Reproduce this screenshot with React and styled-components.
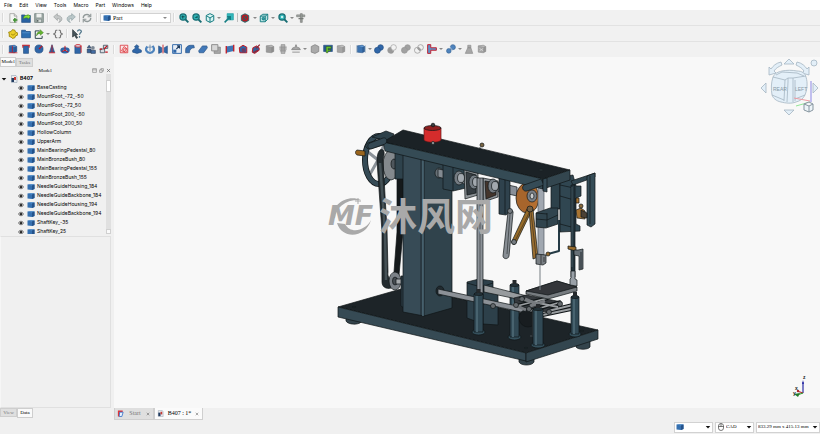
import { Fragment } from "react";
import styled, { createGlobalStyle } from "styled-components";

const blue = "#2f66a8";
const navy = "#244d80";
const red = "#c4141e";
const gray = "#9a9a9a";
const teal = "#189aa0";

const magnifier = (
    <>
        <path d="M10 10l5 5" stroke="#176c72" strokeWidth="3" />
        <circle cx="6.500" cy="6.500" r="5" fill="#2fb2b4" stroke="#176c72" strokeWidth="2" />
    </>
);

const box = (fill, top, line) => (
    <>
        <path d="M2 3l8-1 4 2v8l-4 2-8-1z" fill={fill} stroke={line} strokeWidth=".8" />
        <path d="M2 3l8-1 4 2-4 1z" fill={top} stroke={line} strokeWidth=".4" />
        <path d="M10 5v9l4-2V4z" fill={line} fillOpacity=".5" />
    </>
);

const icons = {
    newFile: (
        <>
            <path d="M3 1h7l4 4v10H3z" fill="#f4f5f3" stroke="#8c8f8a" />
            <path d="M10 1v4h4" fill="#ddd" stroke="#8c8f8a" />
            <path d="M11 8v7M8 11h7" stroke="#3d8f2f" strokeWidth="2.400" />
        </>
    ),
    open: (
        <>
            <path d="M1 3h5l1 1h8v11H1z" fill="#2a62a2" stroke={navy} />
            <path d="M4 9c0-5 4-6 7-5V2l4 4-4 4V8c-3-1-5 0-7 1z" fill="#8ae234" stroke="#3c7d10" strokeWidth=".6" />
        </>
    ),
    save: (
        <>
            <path d="M1 1h14v14H1z" fill="#9ca7a4" stroke="#61706d" />
            <path d="M4 1h8v6H4z" fill="#eef0ee" />
            <path d="M4 10h8v5H4z" fill="#d5dad8" stroke="#61706d" strokeWidth=".7" />
            <path d="M5 11h2v3H5z" fill="#4d5856" />
        </>
    ),
    undo: <path d="M1 6l6-5v3c6 0 8 4 7 7-1 2-3 4-5 4 3-3 3-6-2-6v3z" fill="#c4c7c7" stroke="#8f9494" strokeWidth=".9" />,
    redo: <path d="M15 6L9 1v3C3 4 1 8 2 11c1 2 3 4 5 4-3-3-3-6 2-6v3z" fill="#b9c6c8" stroke="#84989b" strokeWidth=".9" />,
    refresh: (
        <g fill="none" stroke="#919999" strokeWidth="2.200">
            <path d="M2 8c0-5 7-8 11-3M14 8c0 5-7 8-11 3" />
            <path d="M14 1v5H9M2 15v-5h5" strokeWidth="1.800" />
        </g>
    ),
    zoomFit: <>{magnifier}<path d="M6 4v5M4 6h5" stroke="#104b4f" strokeWidth="1.500" /></>,
    zoomSelection: <>{magnifier}<path d="M4 8l5-4v4z" fill="#145c60" /></>,
    isometric: (
        <g fill="#d7f3f2" stroke="#167c80" strokeWidth="1.600">
            <path d="M8 1l6 3v8l-6 3-6-3V4z" />
            <path d="M2 4l6 4 6-4M8 8v7" />
        </g>
    ),
    link: (
        <>
            <path d="M5 1h10v10H5z" fill="#33b7bb" stroke={teal} />
            <path d="M1 15l8-8M5 6h5v5" fill="none" stroke="#157d83" strokeWidth="2.400" />
        </>
    ),
    drawStyle: (
        <>
            <path d="M8 1l6 3v8l-6 3-6-3V4z" fill="#267e83" stroke="#174b50" />
            <circle cx="8" cy="8" r="4.500" fill="#36555a" stroke="#bc1620" strokeWidth="2" />
            <path d="M5 5l6 6" stroke="#bc1620" strokeWidth="2" />
        </>
    ),
    bounding: (
        <g fill="#b7e2e3" stroke="#167c80" strokeWidth="1.500">
            <path d="M2 5l4-3h8v8l-4 4H2z" />
            <path d="M2 5h8v9M10 5l4-3" fill="none" />
            <circle cx="7" cy="9" r="2" fill="#2ca0a4" />
        </g>
    ),
    zoomTool: <>{magnifier}<circle cx="6.500" cy="6.500" r="2" fill="#c8f3f2" /></>,
    measure: (
        <>
            <path d="M1 3h13v3H1z" fill="#a5a9a6" stroke="#767a77" />
            <path d="M7 1h3v14H7z" fill="#989c99" stroke="#767a77" />
            <path d="M4 9h8" stroke="#767a77" strokeWidth="2" />
        </>
    ),
    part: (
        <>
            <path d="M7 1l4 1 1 3 3 1v4l-3 1-1 3-4 1-2-2-3-1V8L1 5l4-1z" fill="#ecd02c" stroke="#9c8306" strokeWidth="1.400" />
            <path d="M5 8l3 2 4-3" fill="none" stroke="#9c8306" strokeWidth="1.400" />
        </>
    ),
    folder: (
        <>
            <path d="M1 2h6l1 2h7v10H1z" fill="#2d6eb0" stroke="#1c4d85" strokeWidth="1.200" />
            <path d="M2 6h12" stroke="#5b95cf" strokeWidth="1.200" />
        </>
    ),
    exportLink: (
        <>
            <path d="M9 3H2v12h11v-4" fill="#f3f3f3" stroke="#31484e" strokeWidth="1.600" />
            <path d="M4 11c0-5 3-7 6-7V1l5 5-5 4V7c-3 0-4 1-6 4z" fill="#63b72e" stroke="#37711a" strokeWidth=".7" />
        </>
    ),
    braces: (
        <g fill="none" stroke="#777" strokeWidth="1.800">
            <path d="M7 2H5L4 3v3L1 8l3 2v3l1 1h2M9 2h2l1 1v3l3 2-3 2v3l-1 1H9" />
        </g>
    ),
    whatsThis: (
        <>
            <path d="M1 1l8 8H6l3 5-2 1-3-5-3 3z" fill="#46545b" stroke="#202a2f" />
            <path d="M9 4c0-4 6-3 6 0 0 2-3 2-3 5M12 11v3" fill="none" stroke="#4c7388" strokeWidth="2" />
        </>
    ),
    cube: <>{box(blue, "#5b92cc", navy)}<path d="M1 14h14M7 3v10" stroke={red} strokeWidth="1.200" /></>,
    cylinder: (
        <>
            <path d="M4 3h8v12H4z" fill={blue} stroke={navy} />
            <path d="M2 2h12M3 2v4M13 2v4" stroke={red} strokeWidth="1.600" />
        </>
    ),
    sphere: <><circle cx="8" cy="8" r="6.500" fill={blue} stroke={navy} /><path d="M8 8l5-5" stroke={red} strokeWidth="1.800" /></>,
    cone: <><path d="M8 1l4 12H4z" fill={blue} stroke={navy} /><path d="M8 2v11M3 14h10" stroke={red} strokeWidth="1.400" /></>,
    torus: (
        <>
            <ellipse cx="8" cy="10" rx="5.500" ry="3" fill="none" stroke={blue} strokeWidth="4" />
            <path d="M8 3v7l5 3M8 10l-5 2" fill="none" stroke={red} strokeWidth="1.600" />
        </>
    ),
    tube: (
        <>
            <path d="M3 3h9v12H3z" fill={blue} stroke={navy} />
            <ellipse cx="8" cy="3" rx="5" ry="2" fill="#dbe8f5" stroke={red} strokeWidth="1.400" />
            <path d="M13 3v11" stroke={red} strokeWidth="1.400" />
        </>
    ),
    primitives: (
        <>
            <path d="M2 6l3-4 3 4zM2 8h6v6H2z" fill="#3a6399" stroke="#293c55" />
            <circle cx="11" cy="6" r="3" fill="#7c8794" />
            <path d="M8 10h7v5H8z" fill="#436ea5" stroke="#293c55" />
        </>
    ),
    builder: (
        <>
            <path d="M2 8h7v6H2zM7 2h7v5H7z" fill="#d8dde3" stroke="#4d5966" strokeWidth="1.400" />
            <path d="M1 8h4M8 8l5-5M10 13h4" stroke={red} strokeWidth="2" />
        </>
    ),
    sketch: (
        <>
            <path d="M2 2h12v12H2z" fill="#fbe7e7" stroke="#d82930" strokeWidth="1.200" />
            <path d="M4 11l4-7 4 3-3 5z" fill="none" stroke="#d82930" strokeWidth="1.200" />
            <circle cx="10" cy="10" r="3" fill="none" stroke="#d82930" />
        </>
    ),
    extrude: <path d="M1 10l4-3V4H4l4-3 3 3h-1v3l5 3v3l-7 2-7-2z" fill={blue} stroke={navy} />,
    revolve: (
        <>
            <path d="M4 4c-5 5-1 10 4 10s9-5 4-11" fill="none" stroke="#4d83bd" strokeWidth="3.600" />
            <path d="M8 1v10M5 5h6" stroke="#7893b0" strokeWidth="1.600" />
        </>
    ),
    mirror: <><path d="M1 3l5 3v7l-5 2zM15 3l-5 3v7l5 2z" fill={blue} stroke={navy} /><path d="M8 1v14" stroke={red} strokeWidth="1.400" /></>,
    scale: (
        <>
            <path d="M1 1h14v14H1z" fill="#e6edf6" stroke={blue} strokeWidth="1.500" />
            <path d="M2 9h5v5H2z" fill={blue} />
            <path d="M7 8l5-5M8 3h4v4" fill="none" stroke="#1e3c60" strokeWidth="1.700" />
        </>
    ),
    fillet: <path d="M1 14V9c0-4 4-7 8-7h5l1 4c-5 0-8 3-8 8z" fill="#3b72b2" stroke={navy} />,
    chamfer: <path d="M1 11l6-8h7l1 3-6 8H2z" fill="#4178b8" stroke={navy} />,
    makeFace: <><path d="M5 5h10v10H5z" fill="#a8a8a8" stroke="#777" /><path d="M1 1h10v10H1z" fill="#d7d7d7" stroke="#8b8b8b" strokeWidth="1.500" /></>,
    ruled: <><path d="M2 4l12-2v9L2 14z" fill="#3f76b5" /><path d="M2 3v12M14 1v11" stroke={red} strokeWidth="2" /></>,
    loft: <><path d="M2 6l6-4 6 3v9H3z" fill={blue} stroke={red} strokeWidth="1.500" /><path d="M6 7h6v7H6z" fill="#6c3c63" /></>,
    sweep: <><path d="M3 6l6-3 4 3v4l-7 5-4-2z" fill="#34629b" stroke={red} strokeWidth="1.500" /><path d="M8 7l6-6M3 14l8-4" stroke="#922334" strokeWidth="2" /></>,
    section: <>{box("#9a9a9a", "#bdbdbd", "#808080")}</>,
    cross: (
        <>
            <path d="M5 1h6v14H5z" fill="#b7b7b7" stroke="#858585" />
            <path d="M2 5h12M2 8h12M3 11h10" stroke="#8d8d8d" strokeWidth="1.600" />
        </>
    ),
    offset: <path d="M8 1l2 5h3l2 3H1l2-3h3zM2 13h12" fill="#aaa" stroke="#828282" strokeWidth="1.300" />,
    thickness: <path d="M2 4l6-3 6 3v8l-6 3-6-2z" fill="#aaa" stroke="#858585" strokeWidth="1.300" />,
    attach: <><path d="M1 2h14v10H1z" fill="#28588f" stroke={navy} /><path d="M5 14V4h8v3H8v2h4v2H8v3z" fill="#68c42a" stroke="#244b12" strokeWidth=".7" /></>,
    projection: box("#a6a6a6", "#c6c6c6", "#878787"),
    compound: <>{box("#3c73b0", "#69a0d8", navy)}<path d="M1 2v12M15 2v12" stroke="#aabbc9" strokeWidth="1.400" /></>,
    boolean: <g fill={blue} stroke={navy}><circle cx="10.500" cy="5.500" r="4.500" /><circle cx="5.500" cy="10" r="4.800" /></g>,
    cut: <g fill="#f2f2f2" stroke={gray}><circle cx="10.500" cy="5.500" r="4.500" /><path d="M6 5a5 5 0 1 0 5 6c-3 0-5-3-5-6z" fill="#999" /></g>,
    union: <g fill="#a1a1a1" stroke="#959595"><circle cx="10.500" cy="5.500" r="4.500" /><circle cx="5.500" cy="10" r="4.800" /></g>,
    common: <g fill="none" stroke={gray} strokeWidth="1.200"><circle cx="10.500" cy="5.500" r="4.500" /><circle cx="5.500" cy="10" r="4.800" /><path d="M6 6l4 4" strokeWidth="3" /></g>,
    join: <path d="M1 1h5v5h9v4H6v5H1z" fill="#5e91c6" stroke="#c51c2b" strokeWidth="1.500" />,
    split: <g fill="#4e83bd" stroke="#376493"><circle cx="11" cy="5" r="4" /><circle cx="4.500" cy="11" r="3.700" /><path d="M6 4l5 7" stroke="#b9cce0" /></g>,
    check: <path d="M6 6h5l3 9H2zM6 2h5v4H6z" fill="#a7a7a7" stroke="#8b8b8b" />,
    defeature: <>{box("#a3a3a3", "#bdbdbd", "#858585")}<path d="M4 7l6 4M10 7l-6 4" stroke="#ddd" strokeWidth="1.200" /></>,
    block: (
        <>
            <path d="M1 3l9-1 5 1v9l-5 2-9-1z" fill="#3570b0" />
            <path d="M1 3l9-1 5 1-5 2z" fill="#5d94cc" />
            <path d="M10 5l5-2v9l-5 2z" fill="#24528a" />
        </>
    ),
    eye: (
        <>
            <path d="M1 8c4-6 10-6 14 0-4 6-10 6-14 0z" fill="#ddd" stroke="#222" strokeWidth="1.600" />
            <circle cx="8" cy="8" r="3" fill="#111" />
        </>
    ),
    doc: (
        <>
            <path d="M3 1h9l2 3v11H3z" fill="#e7ebf0" stroke="#8796a6" />
            <path d="M3 6h5v8H3z" fill="#233d61" />
            <path d="M8 4h4v6H8z" fill="#c93a34" />
        </>
    ),
    start: (
        <>
            <path d="M2 1h11v4H6v10H2z" fill="#df3438" />
            <path d="M6 5h8l-3 10H5z" fill="#e9f2ff" stroke="#2e6ac4" strokeWidth="1.800" />
        </>
    ),
    mouse: <g fill="none" stroke="#333" strokeWidth="1.300"><rect x="3" y="1" width="10" height="14" rx="5" /><path d="M3 7h10M8 1v6" /></g>,
    float: <path d="M2 2h12v12H2zM2 6h12" fill="none" stroke="#666" strokeWidth="1.600" />,
    restore: <path d="M2 6h8v8H2zM6 6V2h8v8h-4" fill="none" stroke="#666" strokeWidth="1.600" />,
    close: <path d="M3 3l10 10M13 3L3 13" stroke="#555" strokeWidth="2" />,
    down: <path d="M2 5h12l-6 7z" fill="#111" />,
};

const Icon = ({ name, size = 10 }) => (
    <svg width={size} height={size} viewBox="0 0 16 16" fill="none" aria-hidden="true">
        {icons[name]}
    </svg>
);

const menus = ["File", "Edit", "View", "Tools", "Macro", "Part", "Windows", "Help"];

const viewTools = ["zoomFit", "zoomSelection", "isometric+", "link", "|", "drawStyle+", "bounding+", "zoomTool+", "measure"];
const solidTools = ["cube", "cylinder", "sphere", "cone", "torus", "tube", "primitives", "builder"];
const shapeTools = [
    "sketch", "extrude", "revolve", "mirror", "scale", "fillet", "chamfer", "makeFace", "ruled", "loft",
    "sweep", "section", "cross", "offset+", "thickness", "attach", "projection",
];
const booleanTools = ["compound+", "boolean", "cut", "union", "common", "join+", "split+", "check", "defeature"];

const treeItems = [
    "BaseCasting", "MountFoot_-72_-50", "MountFoot_-72_50", "MountFoot_200_-50", "MountFoot_200_50",
    "HollowColumn", "UpperArm", "MainBearingPedestal_80", "MainBronzeBush_80", "MainBearingPedestal_155",
    "MainBronzeBush_155", "NeedleGuideHousing_184", "NeedleGuideBackbone_184", "NeedleGuideHousing_194",
    "NeedleGuideBackbone_194", "ShaftKey_-35", "ShaftKey_25",
];

const ToolGroup = ({ items, width }) => (
    <>
        <Grip />
        <Group $width={width}>
            {items.map((item) => {
                if (item === "|") return <Divider key={item} />;
                const name = item.replace("+", "");
                return (
                    <Fragment key={item}>
                        <ToolButton aria-label={name}>
                            <Icon name={name} />
                        </ToolButton>
                        {item.endsWith("+") && (
                            <MoreButton aria-label={`${name} options`}>
                                <Arrow />
                            </MoreButton>
                        )}
                    </Fragment>
                );
            })}
        </Group>
    </>
);

const Picker = ({ label, icon, value, width }) => (
    <PickerBox $width={width}>
        {icon && <Icon name={icon} size={8} />}
        <PickerSelect aria-label={label} defaultValue={value}>
            <option value={value}>{value}</option>
        </PickerSelect>
        <Icon name="down" size={6} />
    </PickerBox>
);

const Post = ({ x, y, width, height }) => (
    <g>
        <ellipse cx={x + width / 2} cy={y + height} rx={width / 2 + 2} ry="3" fill="#35505c" stroke="#101517" />
        <path d={`M${x} ${y}h${width}v${height}h-${width}z`} fill="#314955" stroke="#101517" />
        <path d={`M${x + 3} ${y + 1}v${height - 1}`} stroke="#48636f" strokeWidth="2" />
        <ellipse cx={x + width / 2} cy={y} rx={width / 2} ry="1.500" fill="#243239" stroke="#101517" />
        <path d={`M${x + width / 2} ${y - 1}v-4`} stroke="#25292c" strokeWidth="4" />
    </g>
);

const Machine = () => (
    <Scene viewBox="114 57 706 351" preserveAspectRatio="xMidYMid meet" role="img" aria-label="Machine assembly">
        <g stroke="#101517" strokeWidth=".7" strokeLinejoin="round">
            {/* feet and base plate */}
            <path d="M346 316v5c2 4 13 4 15 1v-5z" fill="#34444c" />
            <path d="M519 358v4c2 4 13 4 15 0v-6z" fill="#34444c" />
            <path d="M576 342v5c2 3 12 3 14 0v-6z" fill="#34444c" />
            <path d="M338 307l70-20 190 43-72 23z" fill="#1d2428" />
            <path d="M338 307l188 46v8l-188-44z" fill="#364a54" />
            <path d="M526 353l72-23v9l-72 23z" fill="#33464f" />
            <ellipse cx="354" cy="307" rx="2" ry=".6" fill="#3b4c54" />
            <ellipse cx="526" cy="348" rx="2" ry=".6" fill="#3b4c54" />
            <ellipse cx="582" cy="331" rx="2" ry=".6" fill="#3b4c54" />

            {/* hand wheel */}
            <path d="M378 160l-10-8M378 160l-9 16M378 160l4 18M378 160l7-18" stroke="#8b9299" strokeWidth="3" />
            <ellipse cx="379" cy="160" rx="14" ry="24" fill="none" stroke="#101517" strokeWidth="6" />
            <ellipse cx="379" cy="160" rx="14" ry="24" fill="none" stroke="#354a55" strokeWidth="4.500" />
            <path d="M357 150l8 1v5l-8-1c-2-1-2-4 0-5z" fill="#9a651d" />
            <path d="M372 137l14-6 8 3-4 9-20 6c-5 0-6-5-2-6l12-4z" fill="#2e414a" />

            {/* belt and pulleys */}
            <ellipse cx="391" cy="165" rx="8" ry="15" fill="#84898d" />
            <path d="M377 161c0-9 3-13 6-11 2 1 1 6 0 10l4 70 1 42c-1 6 3 9 8 6l-2 9c-6 3-12 1-12-5v-50z" fill="#242c30" />
            <path d="M380 163l5 68 1 49" fill="none" stroke="#455156" strokeWidth="2.500" />
            <path d="M397 178h6v54l-4 43-5-3 3-40z" fill="#15191b" />
            <ellipse cx="395" cy="281" rx="6" ry="9" fill="#7b8187" />
            <ellipse cx="395" cy="281" rx="2.500" ry="4" fill="#474d52" />
            <path d="M396 279h7v5h-7z" fill="#a5a9ac" />
            <path d="M401 276h3v32l-3-2z" fill="#2c3d46" />
            <ellipse cx="394" cy="164" rx="3" ry="5" fill="#4e565c" />
            <path d="M395 152h9v27h-9z" fill="#2e424c" />

            {/* column */}
            <path d="M403 150l21 6v160l-21-4z" fill="#374b56" />
            <path d="M424 156l28 6v146l-28 8z" fill="#30434c" />
            <path d="M421 157v159" stroke="#141a1d" />
            <path d="M423 157v159" stroke="#4c6774" strokeWidth="1.500" />

            {/* main shaft and bearings */}
            <ellipse cx="439" cy="173" rx="4" ry="5" fill="#687177" />
            <path d="M438 169l16 3v9l-16-4z" fill="#828a91" />
            <path d="M443 164l23 5v19l-13 3-10-2z" fill="#2f434d" />
            <path d="M456 173l61 14v9l-61-14z" fill="#8a9098" />
            <path d="M453 166v25" />
            <path d="M464 169l14 4v22l-13 4z" fill="#8d9296" />
            <path d="M466 172l10 3v18l-9 2z" fill="#363d42" />
            <path d="M483 178l15 3v16l-15 5z" fill="#8d9296" />
            <path d="M485 181l11 2v12l-10 4z" fill="#44352c" />
            {[459, 474, 493].map((cx, i) => (
                <g key={cx}>
                    <ellipse cx={cx} cy={178 + i * 4} rx="5" ry="7" fill="#747c83" />
                    <ellipse cx={cx + 2} cy={178 + i * 4} rx="3.500" ry="4.500" fill="#a2a8ae" />
                </g>
            ))}
            <path d="M499 176l11 3v33l-4 3-7-1z" fill="#2f424d" />
            <path d="M505 178v36" />

            {/* rear bracket and rods under the arm */}
            <path d="M467 282l12-3 14 2v10l5 3v31l-15-1-16-6z" fill="#2d404a" />
            <path d="M467 283l14 4 12-4M483 287v38" fill="none" />
            <Post x={510} y={285} width={9} height={52} />
            <path d="M477 178h6v115h-6z" fill="#8c9298" />
            <path d="M480 178v115" stroke="#3c4144" />
            <ellipse cx="440" cy="291" rx="4" ry="5" fill="#202a2f" />
            <path d="M438 289l102 22v5l-102-22z" fill="#8c9197" />
            <path d="M484 285l47 12v5l-47-10z" fill="#979b9e" />
            <circle cx="528" cy="318" r="9" fill="#181d20" />

            {/* feed mechanism */}
            <path d="M514 298l12-3 36 7-2 7-14 3-31-6z" fill="#35393d" />
            <path d="M519 299l39 8M517 306l31-8M530 311l31-9M548 311l25-6M538 316l33-7" stroke="#101517" strokeWidth="4" />
            <path d="M519 299l39 8M517 306l31-8M530 311l31-9M548 311l25-6M538 316l33-7" stroke="#9a9ea1" strokeWidth="1.800" />
            <path d="M513 304l13 6M525 299l12 5M530 306l15-5" stroke="#777b7f" strokeWidth="3" />
            {[[516, 305], [522, 299], [529, 309], [549, 312], [493, 306], [560, 304]].map(([cx, cy]) => (
                <circle key={cx} cx={cx} cy={cy} r="2.500" fill="#656a6e" />
            ))}
            <path d="M533 310v27M530 336h7" stroke="#31383c" strokeWidth="2" />
            <path d="M526 291l31-10 20 6v4l-29 8-22-5z" fill="#777c80" />
            <path d="M526 291l31-10 20 6-29 8z" fill="#34363a" />
            <Post x={474} y={294} width={9} height={38} />
            <Post x={533} y={309} width={10} height={36} />
            <Post x={571} y={297} width={8} height={37} />

            {/* take-up links */}
            <ellipse cx="527" cy="198" rx="11" ry="15" fill="#a7652c" />
            <path d="M530 184c11 0 12 27 0 28" fill="#b56f31" />
            <ellipse cx="532" cy="196" rx="5" ry="6" fill="#7a8087" />
            <ellipse cx="532" cy="196" rx="2" ry="3" fill="#c7cacc" />
            <path d="M508 212c1-3 6-2 5 1l-4 43c-1 4-6 3-6 0z" fill="#888e94" />
            <path d="M510 214l-3 40" stroke="#30363a" />
            <path d="M527 209l5 1-16 33c-2 3-5 1-4-2z" fill="#966b29" />
            <path d="M529 209h4l5 48-5 2z" fill="#9b7033" />
            <path d="M530 211l-15 30M531 212l5 45" stroke="#40301b" />
            <circle cx="530" cy="209" r="3" fill="#756044" />
            <circle cx="514" cy="242" r="2.500" fill="#777d82" />
            <circle cx="510" cy="211" r="2.500" fill="#777d82" />

            {/* needle head */}
            <path d="M551 178h9v31h-9z" fill="#2d414a" />
            <path d="M538 187h6v68h-6z" fill="#a0a7b0" stroke="#555d65" />
            <path d="M536 213l14-5h8v16l-12 4-10-1z" fill="#30444e" />
            <path d="M536 219l11 1 11-5M547 213v14M536 213l11 1" fill="none" />
            <path d="M536 254l10 1v8l-3 2-7-1z" fill="#797f84" />
            <path d="M541 255v9M544 257v5" stroke="#222" />
            <path d="M540 265v25" stroke="#777e83" strokeWidth="1" />
            <path d="M559 220v31l-11 3" fill="none" stroke="#253b46" strokeWidth="2" />
            <circle cx="548" cy="254" r="2" fill="#956c31" />

            {/* presser bar and side plates */}
            <path d="M560 177l13-2 3 11h5v10l-5 2v26l4 2v5l-20 1z" fill="#304651" />
            <path d="M560 185l14 3M560 196l14 4M560 224l15 4M573 188v40" />
            <path d="M571 181l24-8v4l-22 8z" fill="#314650" />
            <path d="M587 176l8-3v51l-4 3-4-2z" fill="#354c57" />
            <path d="M590 176v48" />
            <path d="M571 185h4v92h-4z" fill="#24343c" />
            <path d="M572 187v80" stroke="#596f7a" strokeWidth=".6" />
            <path d="M576 198h3v5h-3zM576 210l5-2 4 3v8l-8-1z" fill="#a87432" />
            <path d="M581 210l6 3v5l-6-1z" fill="#4b4135" />
            <circle cx="581" cy="206" r="2" fill="#8c6a39" />
            <path d="M568 246l8 1v4l-8-2z" fill="#9a6d2d" />
            <path d="M574 250h4l5-1v20l-4 1v-14l-5-1z" fill="#687178" />
            <path d="M581 252v17" />
            <path d="M571 271h4v8l2 1v6l-7-1v-6l1-1z" fill="#9aa1a8" />

            {/* upper arm */}
            <path d="M383 142l20-12 167 40-27 9z" fill="#1b2226" />
            <path d="M383 142l160 37v10l-158-38z" fill="#354b55" />
            <path d="M543 179l27-9v10l-27 9z" fill="#33464f" />
            <path d="M524 185l17-6 3 6-17 6c-4 1-6-4-3-6z" fill="#354b56" />
            <path d="M543 179v12l4 1v-14z" fill="#354b56" />
            <path d="M370 143l13-5c4-1 5 4 2 6l-14 5c-4 0-4-5-1-6z" fill="#344853" />
            <ellipse cx="541" cy="170" rx="2" ry=".7" fill="#536168" />
            <circle cx="482" cy="145" r="2" fill="#796541" />
            <path d="M480 147v3" />

            {/* oil cap */}
            <path d="M424 128v12c2 3 15 3 17 0v-12z" fill="#d52c2c" stroke="#641818" />
            <ellipse cx="432.500" cy="128" rx="8.500" ry="2.500" fill="#8f2020" />
            <circle cx="433" cy="125" r="1.800" fill="#3c3d3f" />
            <circle cx="433" cy="143" r="1.500" fill="#a5a9ab" />
        </g>

        {/* watermark */}
        <g fill="#a9a9a9">
            <path d="M361 200c-15-6-29 5-29 19l3-1c1-11 11-19 26-18zM337 223c5 17 29 15 34-3-5 10-20 15-26 4z" />
            <path d="M358 198v6M355 201h6" stroke="#a9a9a9" strokeWidth="1" />
            <WatermarkLatin x="328" y="225">MF</WatermarkLatin>
            <WatermarkText x="379" y="230">沐风网</WatermarkText>
        </g>
    </Scene>
);

const NavigationCube = () => (
    <CubeOverlay viewBox="0 0 60 60" aria-label="Navigation cube">
        <g fill="#e3eff8" stroke="#a4b5c1" strokeWidth=".8" strokeLinejoin="round">
            <path d="M29 2l5 5H24zM29 58l-5-5h10zM1 31l5-5v10zM58 31l-5-5v10z" />
            <path d="M21 5c-5 1-8 4-10 7l-2-2v8l7-2-2-2c2-3 4-4 8-6zM37 5c5 1 8 4 10 7l2-2v8l-7-2 2-2c-2-3-4-4-8-6z" />
            <circle cx="54" cy="6" r="3" />
            <path d="M13 20c2-4 5-5 9-6 5-1 10-1 15 0 5 0 8 2 9 6 2 6 1 13-1 18-2 4-5 6-9 7-5 2-11 1-15 0-5-1-8-4-9-7-1-6-1-12 1-18z" />
            <path d="M13 20l12 3 3-2h5l13-2M12 38l12 5M35 42l10-4M25 23l-1 21M28 21v4l-1 20M33 21v24M35 23v21" fill="none" />
            <path d="M16 18l6-3 15 1 7 3" fill="none" />
        </g>
        <CubeText x="13" y="34">REAR</CubeText>
        <CubeText x="35" y="34">LEFT</CubeText>
        <path d="M51 24v21" stroke="#8c87e5" strokeWidth="1" />
        <path d="M34 41l16 3" stroke="#ec9ca2" strokeWidth="1" />
        <path d="M36 49l14-4" stroke="#91e596" strokeWidth="1" />
        <path d="M44 47l5-2 4 2v6l-4 2-5-2zM44 47l5 2 4-2M49 49v6" fill="#edf4f8" stroke="#8796a0" />
    </CubeOverlay>
);

const App = () => (
    <>
        <GlobalStyle />
        <Window>
            <MenuBar>
                {menus.map((menu) => (
                    <MenuButton key={menu}>{menu}</MenuButton>
                ))}
            </MenuBar>
            <Toolbar>
                <ToolGroup items={["newFile", "open", "save"]} width={39} />
                <ToolGroup items={["undo", "redo", "|", "refresh"]} width={43} />
                <Grip />
                <Workbench>
                    <Icon name="block" size={8} />
                    <WorkbenchSelect aria-label="Workbench" defaultValue="Part">
                        <option>Part</option>
                    </WorkbenchSelect>
                    <Arrow />
                </Workbench>
                <ToolGroup items={viewTools} width={131} />
            </Toolbar>
            <Toolbar>
                <ToolGroup items={["part", "folder", "exportLink+", "braces"]} width={58} />
                <ToolGroup items={["whatsThis"]} width={13} />
            </Toolbar>
            <Toolbar $last>
                <ToolGroup items={solidTools} width={105} />
                <ToolGroup items={shapeTools} width={231} />
                <ToolGroup items={booleanTools} width={135} />
            </Toolbar>

            <Workspace>
                <Sidebar>
                    <TabStrip role="tablist">
                        <Tab role="tab" aria-selected="true" $active>Model</Tab>
                        <Tab role="tab" aria-selected="false">Tasks</Tab>
                    </TabStrip>
                    <DockTitle>
                        <DockName>Model</DockName>
                        <IconButton aria-label="Undock"><Icon name="float" size={5} /></IconButton>
                        <IconButton aria-label="Restore"><Icon name="restore" size={5} /></IconButton>
                        <IconButton aria-label="Close"><Icon name="close" size={5} /></IconButton>
                    </DockTitle>
                    <TreePanel>
                        <Tree>
                            <RootRow>
                                <Icon name="down" size={6} />
                                <Icon name="doc" size={8} />
                                B407
                            </RootRow>
                            {treeItems.map((item) => (
                                <TreeRow key={item}>
                                    <Icon name="eye" size={6} />
                                    <Icon name="block" size={8} />
                                    {item}
                                </TreeRow>
                            ))}
                        </Tree>
                        <ScrollBar>
                            <ScrollThumb />
                            <ScrollEnd />
                        </ScrollBar>
                    </TreePanel>
                    <Properties />
                    <TabStrip role="tablist" $bottom>
                        <Tab role="tab" aria-selected="false">View</Tab>
                        <Tab role="tab" aria-selected="true" $active>Data</Tab>
                    </TabStrip>
                </Sidebar>

                <Main>
                    <Viewport>
                        <Machine />
                        <NavigationCube />
                        <AxisOverlay viewBox="0 0 20 24" aria-label="Axis cross">
                            <path d="M12 18V7" stroke="#2b2da5" strokeWidth="1.200" />
                            <path d="M12 5l1 4h-2z" fill="#2b2da5" />
                            <path d="M12 18l-6-2" stroke="#b3272b" strokeWidth="1.200" />
                            <path d="M12 18l-6 2" stroke="#2f9b35" strokeWidth="1.200" />
                            <path d="M3 19l6-1-2 4z" fill="#237a2a" />
                            <circle cx="7" cy="16" r="1.200" fill="#ad272c" />
                            <AxisText x="12" y="4">z</AxisText>
                            <AxisText x="4" y="15">x</AxisText>
                            <AxisText x="2" y="20">y</AxisText>
                        </AxisOverlay>
                    </Viewport>
                    <DocumentTabs role="tablist">
                        <DocumentTab role="tab" aria-selected="false" $width={40}>
                            <Icon name="start" size={7} />
                            <span>Start</span>
                            <Icon name="close" size={4} />
                        </DocumentTab>
                        <DocumentTab role="tab" aria-selected="true" $width={49} $active>
                            <Icon name="doc" size={7} />
                            <span>B407 : 1*</span>
                            <Icon name="close" size={4} />
                        </DocumentTab>
                    </DocumentTabs>
                </Main>
            </Workspace>

            <StatusBar>
                <Picker label="Notifications" icon="block" value="" width={39} />
                <Picker label="Navigation style" icon="mouse" value="CAD" width={39} />
                <Picker label="View size" value="833.29 mm x 415.13 mm" width={64} />
            </StatusBar>
        </Window>
    </>
);

export default App;


const GlobalStyle = createGlobalStyle`
    * {
        box-sizing: border-box;
    }
    body {
        margin: 0;
        background: #f0f0f0;
        color: #000;
        font-family: Inter, sans-serif;
        font-size: 5px;
        line-height: 9px;
    }
    button, select {
        margin: 0;
        padding: 0;
        border: 0;
        background: none;
        color: inherit;
        font: inherit;
    }
    svg {
        display: block;
        flex: none;
    }
`

const Window = styled.div`
    display: flex;
    flex-direction: column;
    height: 100vh;
    overflow: hidden;
`

const MenuBar = styled.nav`
    display: flex;
    gap: 7px;
    padding: 0 4px;
    height: 10px;
    background: #fff;
`

const MenuButton = styled.button`
    white-space: nowrap;
`

const Toolbar = styled.div`
    display: flex;
    align-items: center;
    flex: none;
    height: ${({ $last }) => ($last ? 15 : 16)}px;
    background: #f1f1f1;
    border-bottom: 1px solid ${({ $last }) => ($last ? "#f1f1f1" : "#e2e2e2")};
`

const Grip = styled.span`
    flex: none;
    width: 2px;
    height: 9px;
    margin: 0 2px;
    border-left: 1px solid #dadada;
    border-right: 1px solid #fafafa;
`

const Group = styled.div`
    display: flex;
    align-items: center;
    justify-content: space-between;
    flex: none;
    width: ${({ $width }) => $width}px;
`

const Divider = styled.span`
    width: 1px;
    height: 9px;
    margin: 0 1px;
    background: #bdbdbd;
`

const ToolButton = styled.button`
    display: flex;
    align-items: center;
    justify-content: center;
    width: 13px;
    height: 13px;
`

const MoreButton = styled.button`
    display: flex;
    align-items: center;
    justify-content: center;
    width: 5px;
    height: 13px;
`

const Arrow = styled.span`
    flex: none;
    border: 2px solid transparent;
    border-top-color: #888;
    border-bottom-width: 0;
`

const Workbench = styled.div`
    display: flex;
    align-items: center;
    gap: 2px;
    flex: none;
    width: 71px;
    height: 10px;
    padding: 0 3px 0 2px;
    border: 1px solid #d2d2d2;
    background: #fff;
`

const WorkbenchSelect = styled.select`
    appearance: none;
    flex: 1;
    min-width: 0;
    height: 8px;
    font-family: "Liberation Serif", serif;
    font-size: 6px;
    line-height: 8px;
`

const Workspace = styled.div`
    display: flex;
    flex: 1;
    min-height: 0;
`

const Sidebar = styled.aside`
    display: flex;
    flex-direction: column;
    flex: none;
    width: 114px;
    padding-right: 3px;
`

const TabStrip = styled.div`
    display: flex;
    align-items: ${({ $bottom }) => ($bottom ? "flex-start" : "flex-end")};
    flex: none;
    height: ${({ $bottom }) => ($bottom ? 12 : 10)}px;
`

const Tab = styled.button`
    width: ${({ $active }) => ($active ? 16 : 17)}px;
    height: ${({ $active }) => ($active ? 10 : 9)}px;
    border: 1px solid #cecece;
    background: ${({ $active }) => ($active ? "#fafafa" : "#dfdfdf")};
    color: ${({ $active }) => ($active ? "#000" : "#777")};
    font-family: "Liberation Serif", serif;
    line-height: 8px;
`

const DockTitle = styled.div`
    display: flex;
    align-items: center;
    gap: 2px;
    flex: none;
    height: 7px;
    line-height: 7px;
`

const DockName = styled.span`
    flex: 1;
    text-align: center;
    font-family: "Liberation Serif", serif;
`

const IconButton = styled.button`
    width: 5px;
    height: 5px;
`

const TreePanel = styled.div`
    display: flex;
    flex: none;
    height: 160px;
`

const Tree = styled.ul`
    flex: 1;
    min-width: 0;
    margin: 0;
    padding: 0;
    overflow: hidden;
    list-style: none;
`

const TreeRow = styled.li`
    display: flex;
    align-items: center;
    gap: 2px;
    height: 9px;
    padding-left: 18px;
    white-space: nowrap;
    svg + svg {
        margin-left: 1px;
    }
`

const RootRow = styled(TreeRow)`
    padding-left: 1px;
    font-weight: 700;
`

const ScrollBar = styled.div`
    display: flex;
    flex-direction: column;
    flex: none;
    width: 5px;
    padding-top: 6px;
    background: #e0e0e0;
`

const ScrollThumb = styled.span`
    height: 12px;
    border: 1px solid #d0d0d0;
    background: #fff;
`

const ScrollEnd = styled.span`
    height: 5px;
    margin-top: auto;
    border: 1px solid #d0d0d0;
    background: #fafafa;
`

const Properties = styled.div`
    flex: 1;
    margin-top: 2px;
    border: 1px solid #e0e0e0;
    border-left-color: #f6f6f6;
`

const Main = styled.main`
    display: flex;
    flex-direction: column;
    flex: 1;
    min-width: 0;
`

const Viewport = styled.section`
    position: relative;
    flex: 1;
    min-height: 0;
    background: #f8f8f8;
`

const Scene = styled.svg`
    width: 100%;
    height: 100%;
`

const WatermarkLatin = styled.text`
    font: italic 700 27px "DejaVu Sans", sans-serif;
`

const WatermarkText = styled.text`
    font: 700 38px "Noto Sans CJK SC", sans-serif;
`

const CubeOverlay = styled.svg`
    position: absolute;
    top: 0;
    right: 0;
    width: 60px;
    height: 60px;
`

const CubeText = styled.text`
    font: 5px "Liberation Sans", sans-serif;
    fill: #8799a6;
`

const AxisOverlay = styled.svg`
    position: absolute;
    right: 9px;
    bottom: 9px;
    width: 20px;
    height: 24px;
`

const AxisText = styled.text`
    font: 700 5px "Liberation Sans", sans-serif;
    fill: #222;
`

const DocumentTabs = styled.div`
    display: flex;
    flex: none;
    height: 12px;
`

const DocumentTab = styled.button`
    display: flex;
    align-items: center;
    justify-content: space-between;
    width: ${({ $width }) => $width}px;
    padding: 0 3px 0 2px;
    border: 1px solid #cfcfcf;
    border-top: 0;
    background: ${({ $active }) => ($active ? "#fbfbfb" : "#dfdfdf")};
    color: ${({ $active }) => ($active ? "#000" : "#777")};
    font-family: "Liberation Serif", serif;
    font-size: 6px;
    white-space: nowrap;
`

const StatusBar = styled.footer`
    display: flex;
    align-items: center;
    justify-content: flex-end;
    gap: 2px;
    flex: none;
    height: 14px;
`

const PickerBox = styled.div`
    display: flex;
    align-items: center;
    gap: 1px;
    flex: none;
    width: ${({ $width }) => $width}px;
    height: 11px;
    padding: 0 1px;
    border: 1px solid #d2d2d2;
    background: #fff;
`

const PickerSelect = styled.select`
    appearance: none;
    flex: 1;
    min-width: 0;
    height: 8px;
    font-family: "Liberation Serif", serif;
    line-height: 8px;
`
